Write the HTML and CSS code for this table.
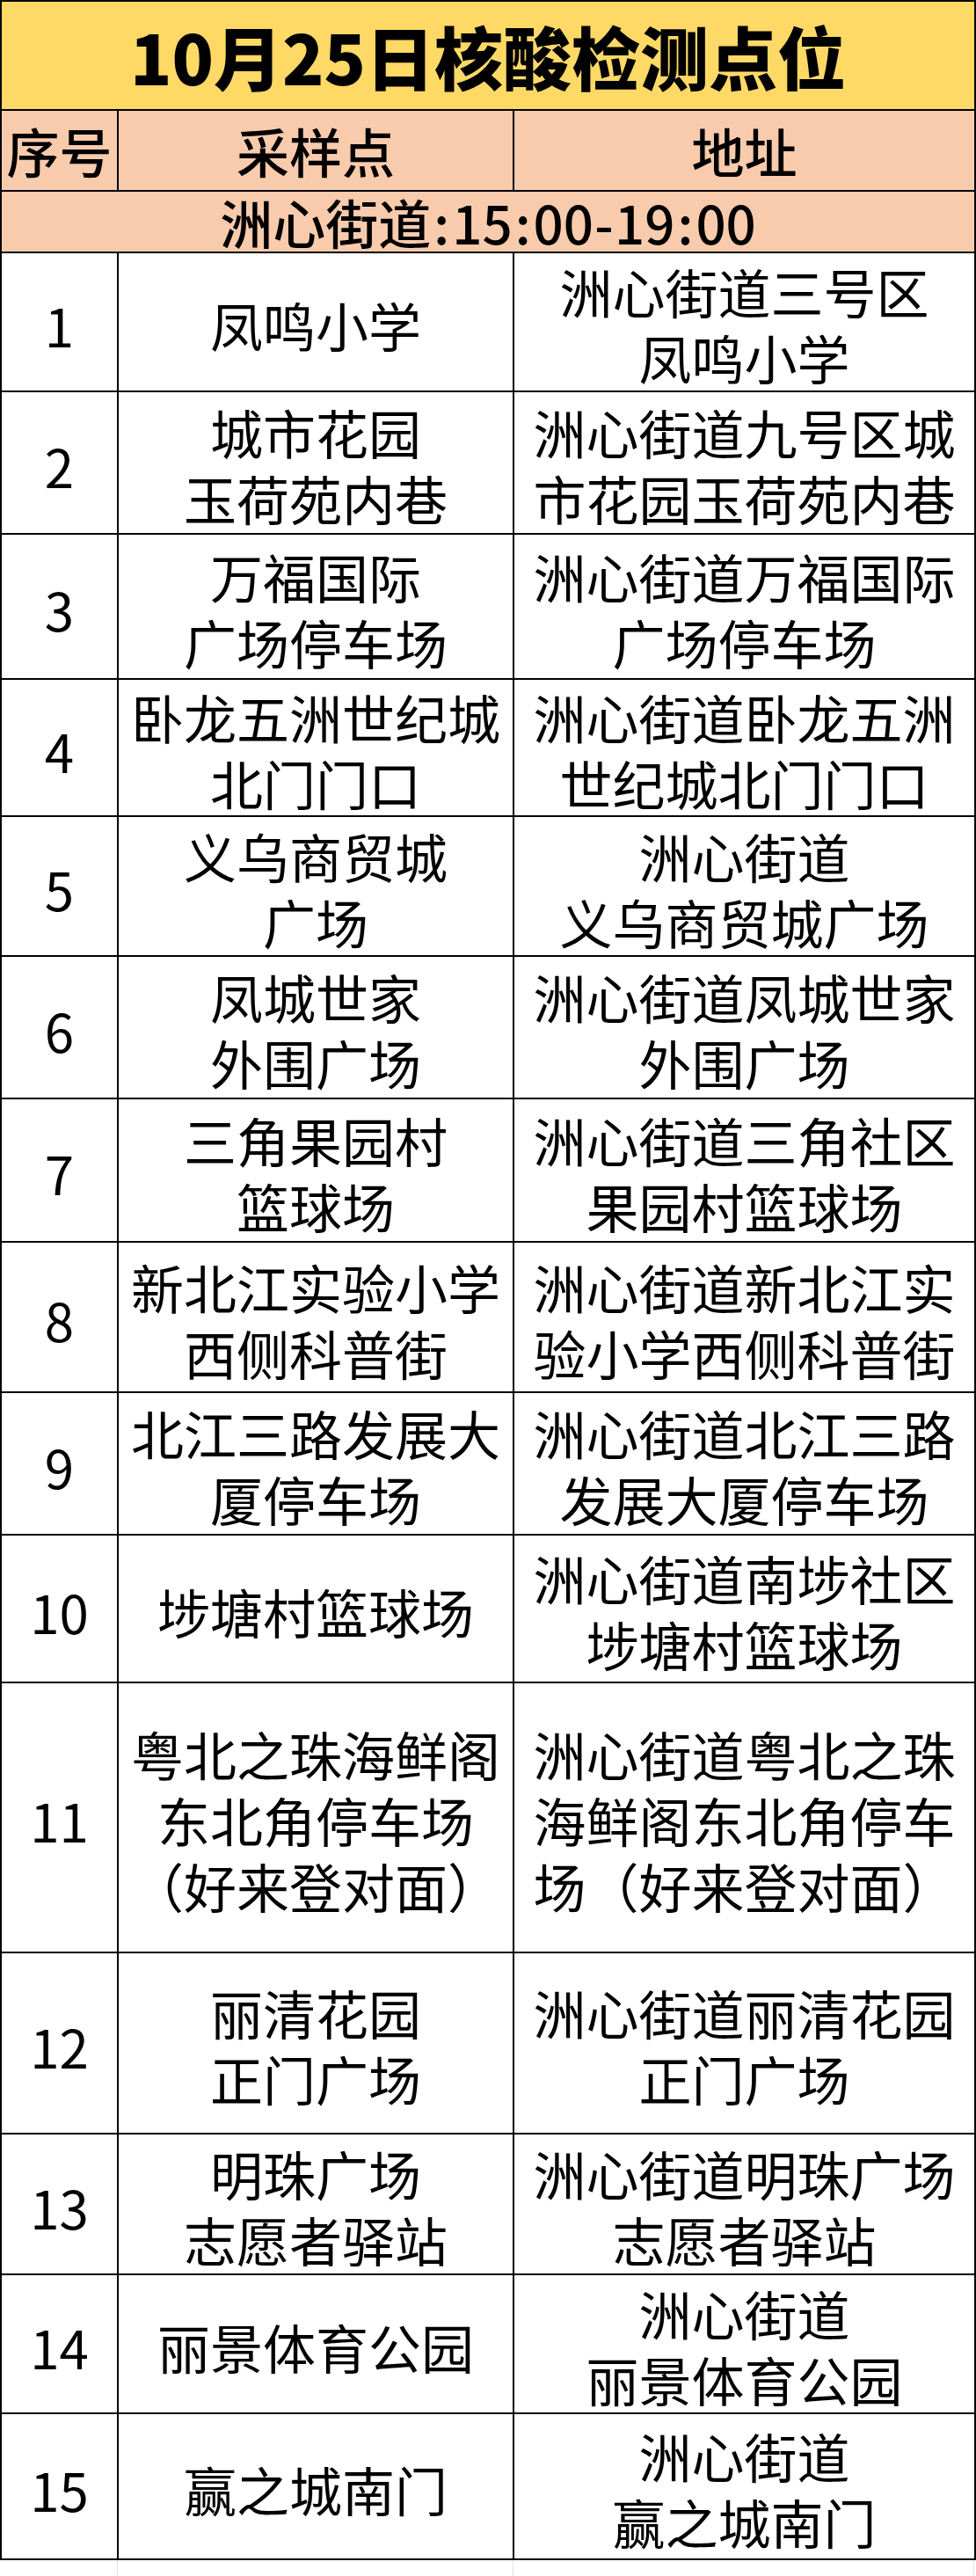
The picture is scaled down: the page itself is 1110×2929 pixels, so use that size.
FILE: index.html
```html
<!DOCTYPE html>
<html lang="zh-CN">
<head>
<meta charset="utf-8">
<title>10月25日核酸检测点位</title>
<link rel="stylesheet" href="styles.css">
</head>
<body>
<table class="sheet">
  <colgroup><col class="c-no"><col class="c-site"><col class="c-addr"></colgroup>
  <thead>
    <tr class="r-title"><th colspan="3" class="title">10月25日核酸检测点位</th></tr>
    <tr class="r-head"><th class="head">序号</th><th class="head">采样点</th><th class="head">地址</th></tr>
    <tr class="r-sec"><th colspan="3" class="sec">洲心街道<span class="hw">:</span>15<span class="hw">:</span>00<span class="hw">-</span>19<span class="hw">:</span>00</th></tr>
  </thead>
  <tbody>
    <tr class="r1"><td class="no">1</td><td><span class="ln">凤鸣小学</span></td><td><span class="ln">洲心街道三号区</span><span class="ln">凤鸣小学</span></td></tr>
    <tr class="r2"><td class="no">2</td><td><span class="ln">城市花园</span><span class="ln">玉荷苑内巷</span></td><td><span class="ln">洲心街道九号区城</span><span class="ln">市花园玉荷苑内巷</span></td></tr>
    <tr class="r3"><td class="no">3</td><td><span class="ln">万福国际</span><span class="ln">广场停车场</span></td><td><span class="ln">洲心街道万福国际</span><span class="ln">广场停车场</span></td></tr>
    <tr class="r4"><td class="no">4</td><td><span class="ln">卧龙五洲世纪城</span><span class="ln">北门门口</span></td><td><span class="ln">洲心街道卧龙五洲</span><span class="ln">世纪城北门门口</span></td></tr>
    <tr class="r5"><td class="no">5</td><td><span class="ln">义乌商贸城</span><span class="ln">广场</span></td><td><span class="ln">洲心街道</span><span class="ln">义乌商贸城广场</span></td></tr>
    <tr class="r6"><td class="no">6</td><td><span class="ln">凤城世家</span><span class="ln">外围广场</span></td><td><span class="ln">洲心街道凤城世家</span><span class="ln">外围广场</span></td></tr>
    <tr class="r7"><td class="no">7</td><td><span class="ln">三角果园村</span><span class="ln">篮球场</span></td><td><span class="ln">洲心街道三角社区</span><span class="ln">果园村篮球场</span></td></tr>
    <tr class="r8"><td class="no">8</td><td><span class="ln">新北江实验小学</span><span class="ln">西侧科普街</span></td><td><span class="ln">洲心街道新北江实</span><span class="ln">验小学西侧科普街</span></td></tr>
    <tr class="r9"><td class="no">9</td><td><span class="ln">北江三路发展大</span><span class="ln">厦停车场</span></td><td><span class="ln">洲心街道北江三路</span><span class="ln">发展大厦停车场</span></td></tr>
    <tr class="r10"><td class="no">10</td><td><span class="ln">埗塘村篮球场</span></td><td><span class="ln">洲心街道南埗社区</span><span class="ln">埗塘村篮球场</span></td></tr>
    <tr class="r11"><td class="no">11</td><td><span class="ln">粤北之珠海鲜阁</span><span class="ln">东北角停车场</span><span class="ln">（好来登对面）</span></td><td><span class="ln">洲心街道粤北之珠</span><span class="ln">海鲜阁东北角停车</span><span class="ln">场（好来登对面）</span></td></tr>
    <tr class="r12"><td class="no">12</td><td><span class="ln">丽清花园</span><span class="ln">正门广场</span></td><td><span class="ln">洲心街道丽清花园</span><span class="ln">正门广场</span></td></tr>
    <tr class="r13"><td class="no">13</td><td><span class="ln">明珠广场</span><span class="ln">志愿者驿站</span></td><td><span class="ln">洲心街道明珠广场</span><span class="ln">志愿者驿站</span></td></tr>
    <tr class="r14"><td class="no">14</td><td><span class="ln">丽景体育公园</span></td><td><span class="ln">洲心街道</span><span class="ln">丽景体育公园</span></td></tr>
    <tr class="r15"><td class="no">15</td><td><span class="ln">赢之城南门</span></td><td><span class="ln">洲心街道</span><span class="ln">赢之城南门</span></td></tr>
  </tbody>
</table>
<div class="tail"><span></span><span></span><span></span></div>
</body>
</html>
```

FILE: styles.css
```css
html, body {
  margin: 0;
  padding: 0;
  background: #ffffff;
}

body {
  width: 1110px;
  font-family: "Noto Sans CJK SC", "Noto Sans", sans-serif;
  color: #000000;
}

.sheet {
  border-collapse: collapse;
  table-layout: fixed;
  width: 1108px;
}

.sheet th,
.sheet td {
  border: 2px solid #000000;
  padding: 0;
  text-align: center;
  vertical-align: middle;
  white-space: nowrap;
}

.c-no { width: 133px; }
.c-site { width: 450px; }
.c-addr { width: 525px; }

.title {
  background: #ffd966;
  font-size: 78px;
  font-weight: 900;
  line-height: 1;
}

.head,
.sec {
  background: #f8cbad;
  font-size: 60px;
  font-weight: 500;
  line-height: 1;
}

.hw {
  display: inline-block;
  width: 0.4em;
  text-align: center;
}

.sheet td {
  font-size: 60px;
  font-weight: 400;
  line-height: 75px;
  padding-top: 4px;
}

.ln {
  display: block;
  height: 75px;
  line-height: 75px;
}

.r-title { height: 124px; }
.r-head { height: 92px; }
.r-sec { height: 70px; }
.r1 { height: 158px; }
.r2 { height: 162px; }
.r3 { height: 165px; }
.r4 { height: 156px; }
.r5 { height: 159px; }
.r6 { height: 162px; }
.r7 { height: 163px; }
.r8 { height: 171px; }
.r9 { height: 162px; }
.r10 { height: 168px; }
.r11 { height: 307px; }
.r12 { height: 206px; }
.r13 { height: 160px; }
.r14 { height: 158px; }
.r15 { height: 166px; }

.tail {
  display: grid;
  grid-template-columns: 134px 450px 524px;
  height: 19px;
}

.tail span {
  border-right: 1px solid #e0e0e0;
}
```
